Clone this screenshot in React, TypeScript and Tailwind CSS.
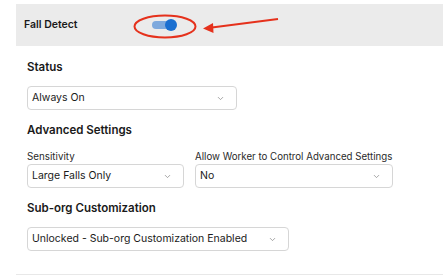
import { ChevronDown } from 'lucide-react';

interface SelectBoxProps {
  value: string;
  width: string;
}

function SelectBox({ value, width }: SelectBoxProps) {
  return (
    <div
      className={`${width} h-[24px] flex items-center justify-between pl-[4px] pr-[11px] bg-white border border-[#d6d6d6] rounded-[4px]`}
    >
      <span className="text-[10.5px] text-[#1a1a1a] leading-none">{value}</span>
      <ChevronDown className="w-[9px] h-[9px] text-[#8a8a8a]" strokeWidth={2} />
    </div>
  );
}

export default function App() {
  return (
    <div className="w-[443px] h-[277px] bg-white overflow-hidden font-['Inter',sans-serif] text-[#1a1a1a]">
      {/* header band */}
      <div className="relative mt-[4px] ml-[16px] h-[42px] bg-[#ebebeb] flex items-center pl-[8px]">
        <span className="w-[128px] text-[10.5px] font-semibold">Fall Detect</span>
        <div className="relative w-[22px] h-[8px] rounded-full bg-[#7ea9dd]">
          <div className="absolute right-[-3px] top-[-2px] w-[12px] h-[12px] rounded-full bg-[#1b6fd0]" />
        </div>
        <svg className="absolute left-[117px] top-[5px]" width="150" height="34" viewBox="0 0 150 34">
          <ellipse cx="32" cy="17.5" rx="30.5" ry="11" fill="none" stroke="#e5311c" strokeWidth="2" />
          <line x1="145" y1="10" x2="75" y2="19" stroke="#e5311c" strokeWidth="2" />
          <path d="M70 19.5 L80 14 L80.5 24 Z" fill="#e5311c" />
        </svg>
      </div>

      <div className="pl-[27px]">
        <h2 className="mt-[14px] text-[11.5px] leading-[14px] font-semibold">Status</h2>
        <div className="mt-[12px]">
          <SelectBox value="Always On" width="w-[210px]" />
        </div>

        <h2 className="mt-[13px] text-[11.5px] leading-[14px] font-semibold">Advanced Settings</h2>
        <div className="mt-[14px] flex gap-[11px]">
          <div className="flex flex-col gap-[1px]">
            <span className="text-[9.8px] leading-[12px] text-[#2a2a2a]">Sensitivity</span>
            <SelectBox value="Large Falls Only" width="w-[157px]" />
          </div>
          <div className="flex flex-col gap-[1px]">
            <span className="text-[9.7px] leading-[12px] text-[#2a2a2a]">Allow Worker to Control Advanced Settings</span>
            <SelectBox value="No" width="w-[198px]" />
          </div>
        </div>

        <h2 className="mt-[13px] text-[11.5px] leading-[14px] font-semibold">Sub-org Customization</h2>
        <div className="mt-[12px]">
          <SelectBox value="Unlocked - Sub-org Customization Enabled" width="w-[262px]" />
        </div>
      </div>

      <div className="mt-[23px] ml-[16px] h-[1px] bg-[#e8e8e8]" />
    </div>
  );
}
